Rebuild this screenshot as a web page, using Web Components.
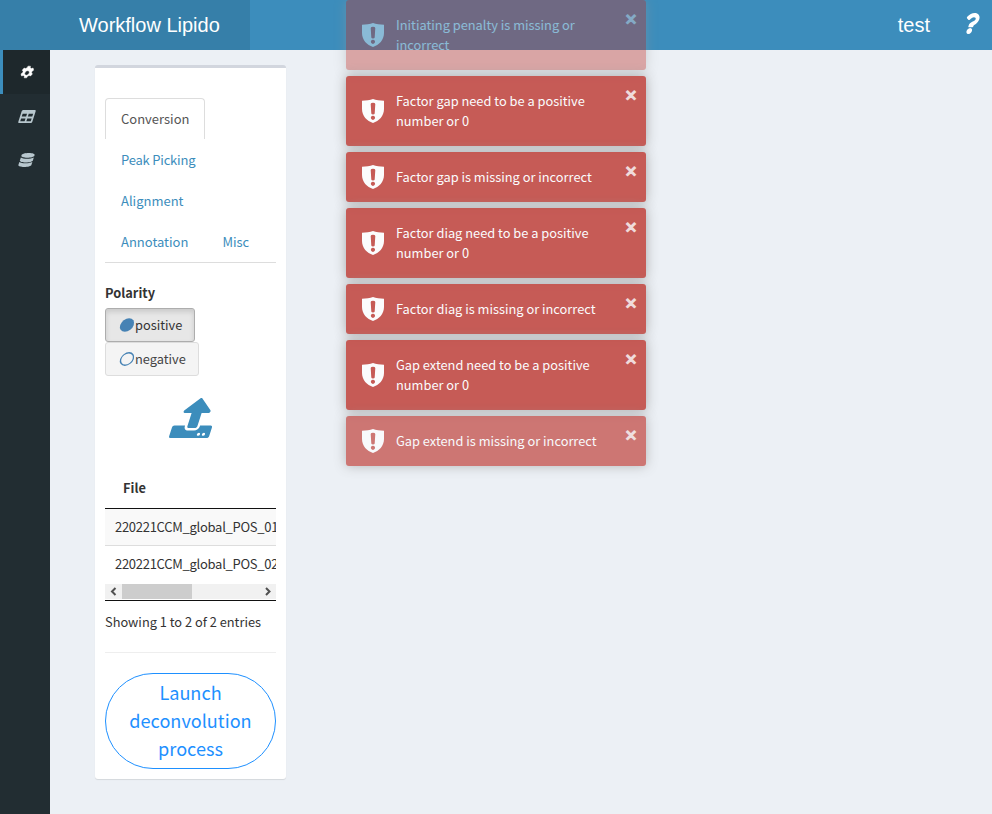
<!DOCTYPE html>
<html lang="en"><head><meta charset="utf-8"><title>Workflow Lipido</title>
<style>
body{margin:0;background:#ecf0f5;font-family:"Noto Sans CJK SC","Noto Sans",sans-serif;font-size:13px;line-height:20px;color:#333;overflow:hidden}
</style></head><body><lipid-app></lipid-app>
<script>
const define=(name,html,setup)=>customElements.define(name,class extends HTMLElement{
  constructor(){super();const t=document.createElement('template');t.innerHTML=html;
    this.attachShadow({mode:'open'}).append(t.content.cloneNode(true));}
  connectedCallback(){if(setup)setup(this);}
});

const ICONS={
 gear:['0 0 512 512','<g transform="translate(256 256)"><path fill-rule="evenodd" d="M-45-250h90l12 60 49 28 58-20 45 78-46 40v56l46 40-45 78-58-20-49 28-12 60h-90l-12-60-49-28-58 20-45-78 46-40v-56l-46-40 45-78 58 20 49-28zM0-82a82 82 0 1 0 .1 0z" stroke="currentColor" stroke-width="16" stroke-linejoin="round"/></g>'],
 table:['0 0 512 512','<path fill-rule="evenodd" d="M464 32H48C21 32 0 53 0 80v352c0 27 21 48 48 48h416c27 0 48-21 48-48V80c0-27-21-48-48-48zM224 416H64v-96h160zm0-160H64v-96h160zm224 160H288v-96h160zm0-160H288v-96h160z"/>'],
 database:['0 0 448 512','<path d="M448 73v30c0 40-100 73-224 73S0 143 0 103V73C0 33 100 0 224 0s224 33 224 73zM448 160v111c0 40-100 73-224 73S0 311 0 271V160c48 33 136 49 224 49s176-16 224-49zm0 168v111c0 40-100 73-224 73S0 479 0 439V328c48 33 136 49 224 49s176-16 224-49z"/>'],
 question:['0 0 384 512','<path d="M202 0C122 0 70 33 29 92c-7 11-5 25 5 33l58 43c10 8 25 6 33-4 30-38 50-59 94-59 34 0 62 17 62 45 0 31-34 43-71 64-37 22-65 50-65 94v16c0 13 11 24 24 24h88c13 0 24-11 24-24v-7c0-32 101-47 101-163C382 63 291 0 202 0zM211 365a74 74 0 1 0 .1 0z"/>'],
 circle:['0 0 512 512','<circle cx="256" cy="256" r="248"/>'],
 ring:['0 0 512 512','<circle cx="256" cy="256" r="228" fill="none" stroke="currentColor" stroke-width="48"/>'],
 upload:['0 0 512 512','<path fill-rule="evenodd" d="M296 384h-80c-13 0-24-11-24-24V192h-88c-18 0-27-21-14-34L242 6c8-8 20-8 28 0l152 152c13 13 4 34-14 34h-88v168c0 13-11 24-24 24zm216-8v112c0 13-11 24-24 24H24c-13 0-24-11-24-24V376c0-13 11-24 24-24h136v8c0 31 25 56 56 56h80c31 0 56-25 56-56v-8h136c13 0 24 11 24 24zM388 464a20 20 0 1 0-40 0 20 20 0 0 0 40 0zm64 0a20 20 0 1 0-40 0 20 20 0 0 0 40 0z"/>'],
 shield:['0 0 22 24','<path fill-rule="evenodd" d="M11 0C8 1.300 4 1.700 0 1.700V10C0 17 5 22 11 24 17 22 22 17 22 10V1.700C18 1.700 14 1.300 11 0zM8.700 5Q8.900 3.800 11 3.800T13.300 5L12.700 14.500Q12.500 15.500 11 15.500T9.300 14.500zM11 16.700a2.100 2.100 0 1 1-.1 0z"/>']
};
define('ui-icon','<style>:host{display:inline-block;width:16px;height:16px;flex:none}svg{display:block;width:100%;height:100%;fill:currentColor;overflow:visible}:host([slant]) svg{transform:skewX(-18deg)}</style><svg preserveAspectRatio="none"></svg>',el=>{
  const [box,body]=ICONS[el.getAttribute('name')];const s=el.shadowRoot.querySelector('svg');s.setAttribute('viewBox',box);s.innerHTML=body;});

define('top-bar',`<style>
:host{display:flex;height:50px;background:#3c8dbc;color:#fff;font:20px/50px "Liberation Sans",Arial,sans-serif}
.logo{width:250px;background:#367fa9;box-sizing:border-box;padding-left:79px}
.right{margin-left:auto;display:flex;align-items:center;padding-right:13px}
ui-icon{width:14px;height:21px;margin:-3px 0 0 35px;position:relative;left:-1px}
</style><div class="logo">Workflow Lipido</div><div class="right"><span>test</span><ui-icon name="question" slant></ui-icon></div>`);

define('side-bar',`<style>
:host{display:block;width:50px;background:#222d32;color:#b8c7ce}
div{height:44px;box-sizing:border-box;display:flex;align-items:center;justify-content:center;border-left:3px solid transparent}
.on{background:#1e282c;border-color:#3c8dbc;color:#fff}
ui-icon{width:14px;height:14px}
</style><div class="on"><ui-icon name="gear" slant style="margin-top:1px"></ui-icon></div><div><ui-icon name="table" slant style="height:15px"></ui-icon></div><div><ui-icon name="database" slant style="width:13px;margin-right:1px"></ui-icon></div>`);

define('tab-item',`<style>
:host{display:block;height:41px;box-sizing:border-box;padding:10px 15px 0;border:1px solid transparent;border-bottom:0;margin-right:2px;color:#3c8dbc;white-space:nowrap}
:host([active]){border-color:#ddd;border-radius:4px 4px 0 0;color:#555;background:#fff}
:host([tight]){letter-spacing:-.2px}
</style><slot></slot>`);
define('tab-list',`<style>:host{display:flex;flex-wrap:wrap;border-bottom:1px solid #ddd}</style><slot></slot>`);

define('radio-button',`<style>
:host{display:flex;align-items:center;box-sizing:border-box;height:34px;width:94px;padding-left:14px;border:1px solid #ddd;border-radius:3px;background:#f4f4f4;color:#444;font-size:12.800px}
:host([active]){width:90px;background:#e7e7e7;border-color:#adadad;color:#333;box-shadow:inset 0 3px 5px rgba(0,0,0,.125)}
::slotted(ui-icon){width:14px;height:14px;color:steelblue;margin:0 1.500px 0 -.5px}
</style><slot name="icon"></slot><slot></slot>`);
define('polarity-picker',`<style>
:host{display:flex;flex-direction:column;align-items:flex-start}
b{height:25px;font-size:12.800px}
</style><b>Polarity</b><slot></slot>`);

define('file-table',`<style>
:host{display:block;overflow:hidden;border-bottom:1px solid #111;white-space:nowrap}
.head{height:38px;box-sizing:border-box;padding:7px 18px;font-size:12.800px;font-weight:bold;border-bottom:1px solid #111}
.row{height:37px;box-sizing:border-box;padding:8px 10px;border-bottom:1px solid #ddd;letter-spacing:-.28px}
.odd{background:#f9f9f9}
.row.last{border:0}
.bar{height:15px;margin:1px 0;background:#f1f1f1;display:flex;align-items:center}
.bar svg{width:17px;height:15px;fill:none;stroke:#505050;stroke-width:2}
.thumb{width:70px;height:15px;background:#cdcdcd;margin-right:auto}
</style><div class="head">File</div><div class="row odd">220221CCM_global_POS_01</div><div class="row last">220221CCM_global_POS_02</div>
<div class="bar"><svg viewBox="0 0 17 15"><path d="M10.500 4L7 7.500 10.500 11"/></svg><div class="thumb"></div><svg viewBox="0 0 17 15"><path d="M7 4l3.500 3.500L7 11"/></svg></div>`);

define('launch-button',`<style>
:host{display:block;box-sizing:border-box;height:96px;padding:4px 20px;border:1px solid #1e90ff;border-radius:48px;color:#1e90ff;font-size:18.100px;line-height:28px;text-align:center}
</style><slot></slot>`);

define('settings-box',`<style>
:host{display:block;box-sizing:border-box;width:191px;height:714px;padding:30px 10px 0;border-top:3px solid #d2d6de;border-radius:3px;background:#fff;box-shadow:0 1px 1px rgba(0,0,0,.1)}
polarity-picker{margin-top:20px}
.up{display:flex;justify-content:center;margin:22px 0 33px;padding-left:9px;color:#3c8dbc}
.up ui-icon{width:40px;height:40px}
.info{margin-top:11px;white-space:nowrap;font-size:12.800px}
.line{height:1px;background:#eee;margin:20px 0}
</style>
<tab-list><tab-item active>Conversion</tab-item><tab-item tight>Peak Picking</tab-item><tab-item>Alignment</tab-item><tab-item>Annotation</tab-item><tab-item>Misc</tab-item></tab-list>
<polarity-picker><radio-button active><ui-icon slot="icon" name="circle" slant></ui-icon>positive</radio-button><radio-button><ui-icon slot="icon" name="ring" slant></ui-icon>negative</radio-button></polarity-picker>
<div class="up"><ui-icon name="upload" slant></ui-icon></div>
<file-table></file-table>
<div class="info">Showing 1 to 2 of 2 entries</div>
<div class="line"></div>
<launch-button>Launch deconvolution process</launch-button>`);

define('toast-note',`<style>
:host{display:flex;align-items:center;position:relative;box-sizing:border-box;width:300px;padding:15px 30px 15px 16px;border-radius:3px;background:#bd362f;color:#fff;opacity:.8;box-shadow:0 0 12px #999;font-size:12.820px}
ui-icon{width:22px;height:24px;margin:-2px 12px -2px 0}
.text{width:210px}
.close{position:absolute;right:5px;top:9px;width:20px;text-align:center;font-weight:bold;font-size:13px;line-height:20px;opacity:.8;-webkit-text-stroke:1.400px #fff}
</style><ui-icon name="shield"></ui-icon><div class="text"><slot></slot></div><span class="close">×</span>`);
define('toast-stack',`<style>
:host{position:absolute;left:346px;top:0;display:flex;flex-direction:column;gap:6px}
</style><slot></slot>`);

define('lipid-app',`<style>
:host{display:flex;flex-direction:column;height:814px;position:relative}
main{display:flex;flex:1}
settings-box{margin:15px 0 0 45px}
</style><top-bar></top-bar><main><side-bar></side-bar><settings-box></settings-box></main>
<toast-stack>
<toast-note style="opacity:.4">Initiating penalty is missing or incorrect</toast-note>
<toast-note>Factor gap need to be a positive number or 0</toast-note>
<toast-note>Factor gap is missing or incorrect</toast-note>
<toast-note>Factor diag need to be a positive number or 0</toast-note>
<toast-note>Factor diag is missing or incorrect</toast-note>
<toast-note>Gap extend need to be a positive number or 0</toast-note>
<toast-note style="opacity:.65">Gap extend is missing or incorrect</toast-note>
</toast-stack>`);
</script></body></html>
